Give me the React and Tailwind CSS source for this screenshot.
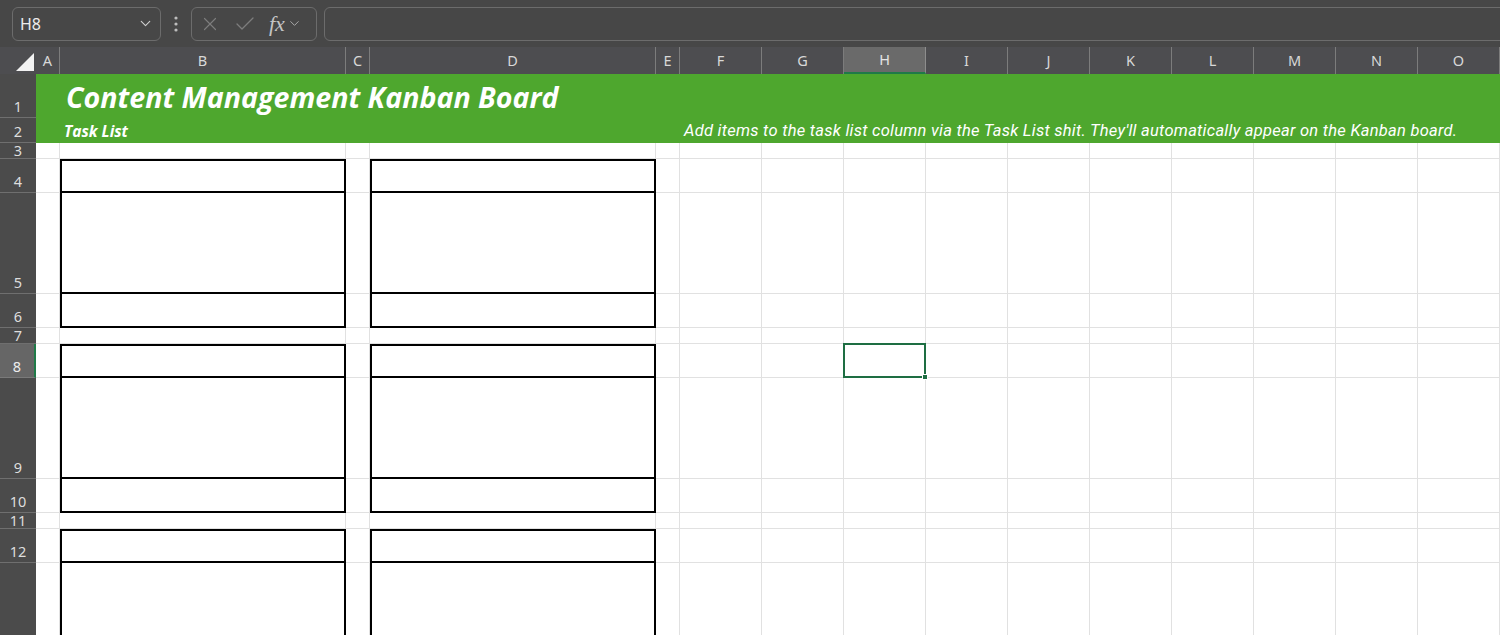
import { ChevronDown, X, Check } from 'lucide-react';

const COLS = ['A', 'B', 'C', 'D', 'E', 'F', 'G', 'H', 'I', 'J', 'K', 'L', 'M', 'N', 'O'];
const ROW_COUNT = 15;
const SHORT_ROWS = [3, 7, 11, 15];

const headerFont = { fontFamily: '"Noto Sans", "Open Sans", sans-serif' };

function Card({ place }) {
  return (
    <div className={`${place} z-10 flex flex-col bg-white border-2 border-black`}>
      <div className="h-[32px] border-b-2 border-black" />
      <div className="h-[101px] border-b-2 border-black" />
      <div className="flex-1" />
    </div>
  );
}

function FormulaBar() {
  return (
    <div className="h-[47px] bg-[#474747] flex items-center pl-3 gap-0 overflow-hidden" style={headerFont}>
      {/* Name box */}
      <div className="w-[149px] h-[34px] shrink-0 rounded-md border border-[#6c6c6c] flex items-center justify-between pl-[7px] pr-[6px]">
        <span className="text-[16px] text-[#ececec]">H8</span>
        <ChevronDown size={17} strokeWidth={1.6} className="text-[#cfcfcf]" />
      </div>
      <div className="w-[30px] shrink-0 flex justify-center text-[#bdbdbd]">
        <svg width="4" height="16" viewBox="0 0 4 16" fill="currentColor">
          <circle cx="2" cy="2" r="1.6" />
          <circle cx="2" cy="8" r="1.6" />
          <circle cx="2" cy="14" r="1.6" />
        </svg>
      </div>
      {/* fx buttons */}
      <div className="w-[126px] h-[34px] shrink-0 rounded-md border border-[#6c6c6c] flex items-center pl-[7px] gap-[12px]">
        <X size={22} strokeWidth={1.3} className="text-[#7d7d7d]" />
        <Check size={24} strokeWidth={1.3} className="text-[#7d7d7d]" />
        <span className="flex items-center gap-[2px]">
          <span className="text-[22px] italic text-[#c4c4c4] leading-none" style={{ fontFamily: '"Liberation Serif", serif' }}>fx</span>
          <ChevronDown size={15} strokeWidth={1.6} className="text-[#a9a9a9]" />
        </span>
      </div>
      {/* input */}
      <div className="ml-[7px] w-[1200px] h-[34px] shrink-0 rounded-md border border-[#6c6c6c]" />
    </div>
  );
}

function rowHeaderClass(r) {
  const short = SHORT_ROWS.includes(r);
  if (r === 8) {
    return 'bg-[#666666] border-b border-[#7a7a7a] border-r-2 border-r-[#1f7a48] overflow-hidden flex items-end justify-center text-[14.5px] leading-[15px] pb-[3px] text-[#ededed]';
  }
  return short
    ? 'bg-[#4b4b4b] border-b border-[#6f6f6f] overflow-hidden flex items-end justify-center text-[14.5px] leading-[15px] text-[#dedede]'
    : 'bg-[#4b4b4b] border-b border-[#6f6f6f] overflow-hidden flex items-end justify-center text-[14.5px] leading-[15px] pb-[3px] text-[#dedede]';
}

export default function App() {
  const rows = Array.from({ length: ROW_COUNT }, (_, i) => i + 1);

  return (
    <div className="w-[1500px] h-[635px] overflow-hidden bg-white">
      <FormulaBar />

      <div className="grid grid-cols-[36px_24px_286px_24px_286px_24px_repeat(10,82px)] grid-rows-[27px_44px_25px_16px_34px_101px_34px_16px_34px_101px_34px_16px_34px_101px_34px_16px]">
        {/* corner */}
        <div className="col-start-1 row-start-1 bg-[#4d4d50] flex items-end justify-end pr-[2px] pb-[3px]">
          <svg width="18" height="18" viewBox="0 0 18 18">
            <polygon points="18,0 18,18 0,18" fill="#f2f2f2" />
          </svg>
        </div>

        {/* column headers */}
        {COLS.map((c, i) => (
          <div
            key={c}
            style={{ gridColumn: i + 2, gridRow: 1, ...headerFont }}
            className={
              c === 'H'
                ? 'bg-[#6a6a6a] border-r border-[#8d8d8d] border-b-2 border-b-[#1f7a48] flex items-center justify-center text-[14.5px] text-[#e4e4e4]'
                : 'bg-[#4d4d50] border-r border-[#7c7c7c] flex items-center justify-center text-[14.5px] text-[#d8d8d8]'
            }
          >
            {c}
          </div>
        ))}

        {/* row headers */}
        {rows.map((r) => (
          <div key={r} style={{ gridColumn: 1, gridRow: r + 1, ...headerFont }} className={rowHeaderClass(r)}>
            {r}
          </div>
        ))}

        {/* cells */}
        {rows.map((r) =>
          COLS.map((c, i) => (
            <div
              key={c + r}
              style={{ gridColumn: i + 2, gridRow: r + 1 }}
              className="bg-white border-r border-b border-[#e1e1e1]"
            />
          ))
        )}

        {/* title band */}
        <div className="col-start-2 col-end-17 row-start-2 row-end-4 z-10 bg-[#4ea72e] grid grid-cols-[24px_286px_24px_286px_24px_1fr] grid-rows-[44px_25px] text-white">
          <div className="col-start-2 col-end-7 row-start-1 flex items-end pl-[6px] pb-[6px]">
            <span
              className="text-[28.6px] font-bold italic whitespace-nowrap leading-none"
              style={{ fontFamily: '"Open Sans", sans-serif' }}
            >
              Content Management Kanban Board
            </span>
          </div>
          <div className="col-start-2 row-start-2 flex items-center pl-[4px] pt-[2px]">
            <span className="text-[15.5px] font-bold italic whitespace-nowrap" style={{ fontFamily: '"Open Sans", sans-serif' }}>
              Task List
            </span>
          </div>
          <div className="col-start-6 row-start-2 flex items-center pl-[4px] pt-[2px]">
            <span className="text-[16.5px] italic whitespace-nowrap tracking-[0.26px]" style={{ fontFamily: 'Roboto, sans-serif' }}>
              Add items to the task list column via the Task List shit. They'll automatically appear on the Kanban board.
            </span>
          </div>
        </div>

        {/* kanban cards */}
        <Card place="col-start-3 row-start-5 row-end-8" />
        <Card place="col-start-5 row-start-5 row-end-8" />
        <Card place="col-start-3 row-start-9 row-end-12" />
        <Card place="col-start-5 row-start-9 row-end-12" />
        <Card place="col-start-3 row-start-13 row-end-16" />
        <Card place="col-start-5 row-start-13 row-end-16" />

        {/* active cell H8 */}
        <div className="col-start-9 row-start-9 z-10 relative -mt-px -ml-px border-2 border-[#1e6e43]">
          <div className="absolute -right-[4px] -bottom-[4px] w-[6px] h-[6px] bg-[#1e6e43] border border-white" />
        </div>
      </div>
    </div>
  );
}
